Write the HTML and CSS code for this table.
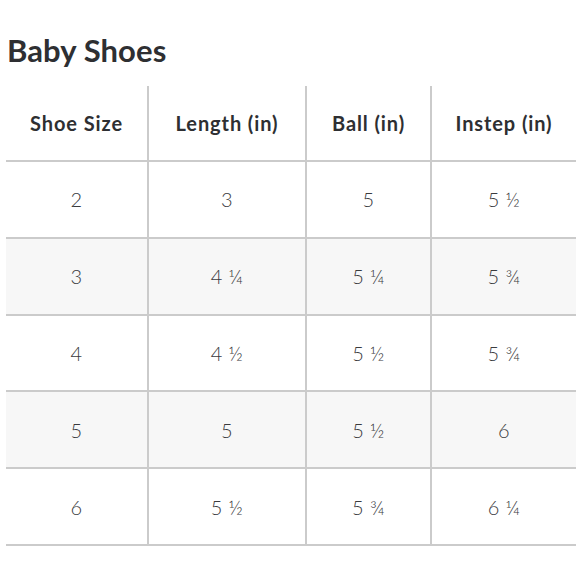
FILE: index.html
```html
<!DOCTYPE html>
<html>
<head>
<meta charset="utf-8">
<link rel="stylesheet" href="styles.css">
</head>
<body>
<h1 class="title">Baby Shoes</h1>
<table class="sizes">
  <colgroup>
    <col class="c1"><col class="c2"><col class="c3"><col class="c4">
  </colgroup>
  <thead>
    <tr><th>Shoe Size</th><th>Length (in)</th><th>Ball (in)</th><th>Instep (in)</th></tr>
  </thead>
  <tbody>
    <tr><td>2</td><td>3</td><td>5</td><td>5 ½</td></tr>
    <tr class="alt"><td>3</td><td>4 ¼</td><td>5 ¼</td><td>5 ¾</td></tr>
    <tr><td>4</td><td>4 ½</td><td>5 ½</td><td>5 ¾</td></tr>
    <tr class="alt"><td>5</td><td>5</td><td>5 ½</td><td>6</td></tr>
    <tr><td>6</td><td>5 ½</td><td>5 ¾</td><td>6 ¼</td></tr>
  </tbody>
</table>
</body>
</html>
```
FILE: styles.css
```css
html, body {
  margin: 0;
  padding: 0;
  background: #fff;
}
body {
  padding: 0 4px 0 6px;
  font-family: Lato, "Open Sans", sans-serif;
  color: #2e2f32;
}
.title {
  font-size: 31px;
  line-height: 40px;
  font-weight: 700;
  margin: 30px 0 16px 1px;
  color: #2e2f32;
  letter-spacing: 0.1px;
}
.sizes {
  border-collapse: collapse;
  width: 570px;
  table-layout: fixed;
}
.sizes th, .sizes td {
  text-align: center;
  vertical-align: middle;
  padding: 0;
  font-size: 20px;
  border-left: 2px solid #cbcbcb;
  border-bottom: 2px solid #cbcbcb;
}
.sizes th:first-child, .sizes td:first-child {
  border-left: none;
}
.sizes th {
  height: 74px;
  font-weight: 700;
  letter-spacing: 0.9px;
  color: #2e2f32;
}
.sizes td {
  height: 74.8px;
  font-weight: 300;
  letter-spacing: 0.4px;
  color: #3a3b3e;
}
.sizes .alt td {
  background: #f7f7f7;
}
.c1 { width: 142px; }
.c2 { width: 158px; }
.c3 { width: 125px; }
.c4 { width: 145px; }
```
